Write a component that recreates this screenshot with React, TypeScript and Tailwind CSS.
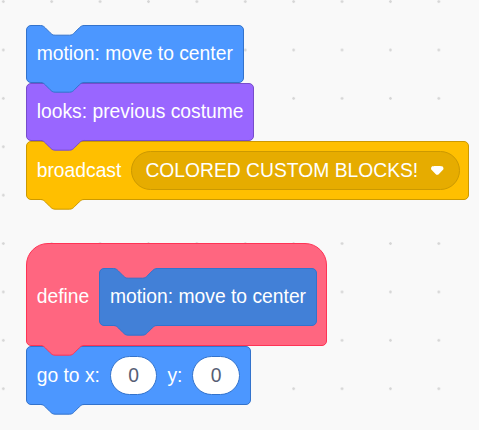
import type { ReactNode } from 'react'

// scratch-blocks style notch, scaled to the workspace zoom
const S = 1.21
const n = (v: number) => +(v * S).toFixed(2)

function notch(y: number) {
  return `M${n(12)} ${y} c${n(2)} 0 ${n(3)} ${n(1)} ${n(4)} ${n(2)} l${n(4)} ${n(4)} c${n(1)} ${n(1)} ${n(2)} ${n(2)} ${n(4)} ${n(2)} h${n(12)} c${n(2)} 0 ${n(3)} ${n(-1)} ${n(4)} ${n(-2)} l${n(4)} ${n(-4)} c${n(1)} ${n(-1)} ${n(2)} ${n(-2)} ${n(4)} ${n(-2)}`
}

interface BlockProps {
  fill: string
  stroke: string
  cut?: string
  tab?: boolean
  className: string
  children: ReactNode
}

function Block({ fill, stroke, cut, tab = true, className, children }: BlockProps) {
  return (
    <div className={`relative flex items-center border ${className}`}>
      {cut && (
        <svg className="absolute left-[-1px] top-[-1px] overflow-visible" width="70" height="14">
          <path d={`${notch(0.5)} L${n(48)} -0.5 L${n(12)} -0.5 Z`} fill={cut} />
          <path d={notch(0.5)} fill="none" stroke={stroke} />
        </svg>
      )}
      {children}
      {tab && (
        <svg className="absolute left-[-1px] top-[calc(100%-1px)] overflow-visible" width="70" height="14">
          <path d={`${notch(1.5)} L${n(48)} 0 L${n(12)} 0 Z`} fill={fill} />
          <path d={notch(1.5)} fill="none" stroke={stroke} />
        </svg>
      )}
    </div>
  )
}

function NumberInput({ value }: { value: string }) {
  return (
    <div className="flex h-[38.7px] w-[47.5px] items-center justify-center rounded-full border border-[#3373cc] bg-white text-[#575e75]">
      {value}
    </div>
  )
}

function DropdownArrow() {
  return (
    <svg width="12.5" height="8.6" viewBox="0 0 12.71 8.79">
      <path
        fill="#fff"
        d="M12.71 2.44A2.41 2.41 0 0 1 12 4.16L8.08 8.08a2.45 2.45 0 0 1-3.45 0L.72 4.16A2.42 2.42 0 0 1 0 2.44 2.48 2.48 0 0 1 .71.71C1 .47 1.43 0 6.36 0s5.39.46 5.64.71a2.44 2.44 0 0 1 .71 1.73z"
      />
    </svg>
  )
}

export default function App() {
  return (
    <div className="min-h-screen w-full bg-[#f9f9f9] bg-[radial-gradient(circle,#d6d6d6_1px,transparent_1.6px)] bg-size-[48.4px_48.4px] bg-position-[-20.9px_-22.6px] pl-[26px] pt-[24.7px] font-['Liberation_Sans',Arial,sans-serif] text-[19.3px] leading-none text-white">
      <div className="flex flex-col items-start">
        <Block
          fill="#4c97ff"
          stroke="#3373cc"
          cut="#f9f9f9"
          className="z-[4] h-[58.3px] rounded-[5px] border-[#3373cc] bg-[#4c97ff] px-[9.7px]"
        >
          motion: move to center
        </Block>
        <Block
          fill="#9966ff"
          stroke="#774dcb"
          className="z-[3] h-[58.3px] rounded-[5px] border-[#774dcb] bg-[#9966ff] px-[9.7px]"
        >
          looks: previous costume
        </Block>
        <Block
          fill="#ffbf00"
          stroke="#cc9900"
          className="z-[2] h-[58.3px] gap-[10px] rounded-[5px] border-[#cc9900] bg-[#ffbf00] pl-[9.7px] pr-[8.5px]"
        >
          <span>broadcast</span>
          <div className="flex h-[38.7px] items-center gap-[13px] rounded-full border border-[#cc9900] bg-[#e6ac00] pl-[13px] pr-[15px]">
            <span>COLORED CUSTOM BLOCKS!</span>
            <DropdownArrow />
          </div>
        </Block>
      </div>

      <div className="mt-[43.7px] flex flex-col items-start">
        <Block
          fill="#ff6680"
          stroke="#ff3355"
          className="z-[2] gap-[10px] rounded-b-[5px] rounded-t-[22px] border-[#ff3355] bg-[#ff6680] pb-[19px] pl-[9.7px] pr-[9px] pt-[23.7px]"
        >
          <span>define</span>
          <Block
            fill="#4280d7"
            stroke="#3373cc"
            cut="#ff6680"
            className="h-[58.3px] rounded-[5px] border-[#3373cc] bg-[#4280d7] px-[9.7px]"
          >
            motion: move to center
          </Block>
        </Block>
        <Block
          fill="#4c97ff"
          stroke="#3373cc"
          className="z-[1] h-[58.3px] gap-[10px] rounded-[5px] border-[#3373cc] bg-[#4c97ff] pl-[9.7px] pr-[9.7px]"
        >
          <span>go to x:</span>
          <NumberInput value="0" />
          <span>y:</span>
          <NumberInput value="0" />
        </Block>
      </div>
    </div>
  )
}
